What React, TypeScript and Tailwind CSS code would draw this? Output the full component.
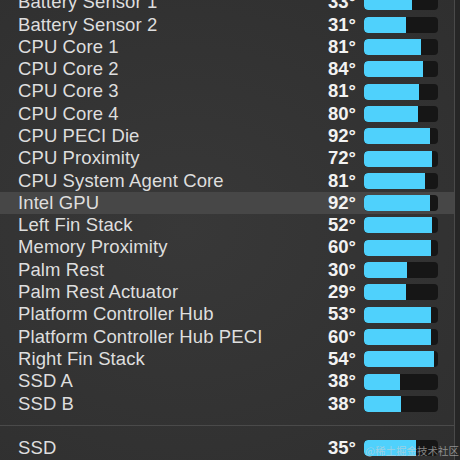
const sensors: [string, string, number][] = [
  ["Battery Sensor 1", "33°", 48],
  ["Battery Sensor 2", "31°", 42],
  ["CPU Core 1", "81°", 57],
  ["CPU Core 2", "84°", 59],
  ["CPU Core 3", "81°", 55],
  ["CPU Core 4", "80°", 54],
  ["CPU PECI Die", "92°", 66],
  ["CPU Proximity", "72°", 68],
  ["CPU System Agent Core", "81°", 61],
  ["Intel GPU", "92°", 66],
  ["Left Fin Stack", "52°", 68],
  ["Memory Proximity", "60°", 67],
  ["Palm Rest", "30°", 43],
  ["Palm Rest Actuator", "29°", 42],
  ["Platform Controller Hub", "53°", 67],
  ["Platform Controller Hub PECI", "60°", 67],
  ["Right Fin Stack", "54°", 70],
  ["SSD A", "38°", 36],
  ["SSD B", "38°", 37],
];

function Row({ label, value, fill, active }: { label: string; value: string; fill: number; active?: boolean }) {
  return (
    <div className={"flex items-center h-[22.3px] pl-[18px] pr-[16px] " + (active ? "bg-[#474747]" : "")}>
      <span className="flex-1 text-[#dedede] whitespace-nowrap tracking-[0.1px]">{label}</span>
      <span className="font-semibold text-[#f2f2f2] mr-[8px]">{value}</span>
      <div className="w-[74px] h-[16px] rounded-[4px] bg-[#161616] overflow-hidden flex">
        <div className="h-full bg-[#4fd1fc] rounded-l-[4px]" style={{ width: fill }} />
      </div>
    </div>
  );
}

export default function App() {
  return (
    <div className="relative w-[460px] h-[460px] overflow-hidden flex text-[18.5px] leading-none font-['Liberation_Sans',Arial,sans-serif] bg-[radial-gradient(ellipse_at_40%_50%,#383838,#2f2f2f)]">
      <div className="w-[455px] shrink-0 border-r border-[#4a4a4a] flex flex-col">
        <div className="mt-[-8.7px]">
          {sensors.map(([l, v, f]) => (
            <Row key={l} label={l} value={v} fill={f} active={l === "Intel GPU"} />
          ))}
        </div>
        <div className="mt-[10px] h-px bg-[#4a4a4a]" />
        <div className="mt-[11px]">
          <Row label="SSD" value="35°" fill={52} />
        </div>
      </div>
      <div className="flex-1 bg-[#262626]" />
      <span className="absolute right-[1px] bottom-[4px] text-[10.5px] leading-none text-[#d0d0d0]/60 font-['Noto_Sans_CJK_SC',sans-serif]">
        @稀土掘金技术社区
      </span>
    </div>
  );
}
